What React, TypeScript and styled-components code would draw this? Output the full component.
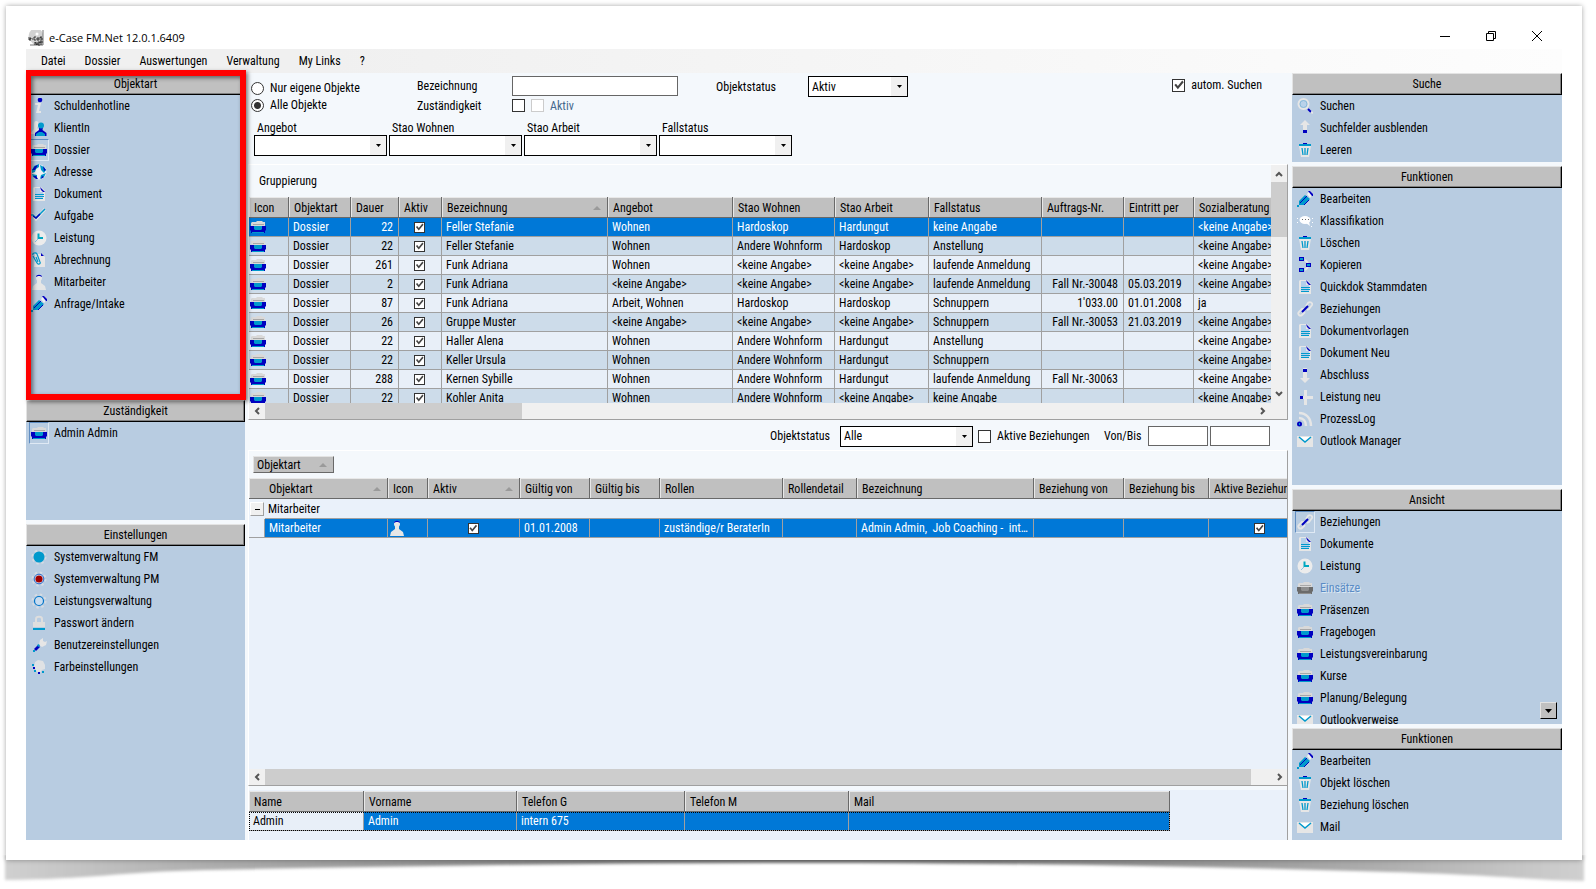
import React, { useId } from "react";
import styled, { createGlobalStyle, css } from "styled-components";

const color = {
  panel: "#b8cce1",
  client: "#f4f8fc",
  grid: "#eaf1fa",
  rowEven: "#e8eff8",
  rowOdd: "#cddcea",
  silver: "#c0c0c0",
  line: "#a0a0a0",
  dark: "#696969",
  select: "#0078d7",
  navy: "#0000c0",
  cyan: "#0099cc",
  pale: "#e6e6e6",
};

const GlobalStyle = createGlobalStyle`
  *, *::before, *::after { box-sizing: border-box; }
  body { margin: 0; background: #fff; }
  body, button, input, select, table {
    font: 12px/14px "Roboto Condensed", "Liberation Sans", sans-serif;
    color: #000;
  }
  button { border: 0; padding: 0; background: none; }
`;

/* ---------- icons ---------- */

type IconName =
  | "info" | "client" | "folder" | "folderOff" | "globe" | "doc" | "check" | "clock"
  | "clip" | "person" | "pencil" | "sysBlue" | "sysRed" | "sysRing" | "lock" | "wrench"
  | "palette" | "search" | "up" | "down" | "trash" | "chat" | "copy" | "link" | "plus"
  | "feed" | "mail";

const cog = (
  <circle cx="8" cy="8" r="6.5" fill="none" stroke="#d5dbe2" strokeWidth="2" strokeDasharray="2.4 2.7" />
);

const folder = (body: string, inner: string) => (
  <>
    <path d="M2 3h4l1-1h5l1 1h2v4H1V4z" fill="#d9d9d9" />
    <path d="M3 5h11v1H3z" fill="#a8a8a8" />
    <path d="M0 7h16v4l-1 1v2H1v-2l-1-1z" fill={body} />
    <path d="M4 7h8v3l-1 1H5l-1-1zM2 13h12v1H2z" fill={inner} />
  </>
);

const drawings: Record<IconName, React.ReactNode> = {
  info: (
    <>
      <circle cx="9" cy="2" r="2.3" fill={color.navy} />
      <path d="M4 5h6L8 13h2v2H5l2-8H4z" fill={color.pale} />
    </>
  ),
  client: (
    <>
      <path d="M5 1c2 0 3 2 2.500 4L6 8l2 2v4H0c0-3 2-3 3-5V4c0-2 1-3 2-3z" fill={color.pale} />
      <path d="M8 7h4l-.5 3 4 3v3H4v-3l4-3z" fill={color.navy} />
      <circle cx="10" cy="5.500" r="3" fill={color.cyan} />
      <path d="M8 12h3l3 2v2H5v-2z" fill={color.cyan} />
    </>
  ),
  folder: folder(color.navy, color.cyan),
  folderOff: folder("#6b6b6b", "#8e8e8e"),
  globe: (
    <>
      <circle cx="8" cy="8" r="7.500" fill="#eef1f4" />
      <path d="M3 2l5-2v3L5 5 4 8 1 9V6zM9 1l4 2 2 3-2 3-3-3zM15 9l-2 4-4 2 1-4zM1 10l5 1v4l-4-2z" fill={color.cyan} />
      <path d="M4 2l3-1-3 5H1zM12 2l3 4-2 1zM2 12h3l2 3-2 0zM11 12l2 1-3 2z" fill={color.navy} />
    </>
  ),
  doc: (
    <>
      <path d="M3 1h7l4 4v10H2V2z" fill={color.pale} />
      <path d="M4 2h5v4h3v7H4z" fill="#b4d0ea" />
      <path d="M9 1l5 5h-2L10 4z" fill={color.navy} />
      <path d="M4 8h9v1H4zM4 10h9v1H4zM4 12h8v1H4z" fill={color.cyan} />
    </>
  ),
  check: (
    <>
      <path d="M1 6l4 5 9-10" fill="none" stroke={color.pale} strokeWidth="3" />
      <path d="M0 7h2l3 3L14 1" fill="none" stroke={color.cyan} strokeWidth="1.500" />
      <path d="M2 8l3 2 4-4" fill="none" stroke={color.navy} strokeWidth="1.500" />
    </>
  ),
  clock: (
    <>
      <circle cx="8" cy="8" r="7.500" fill="#ececec" />
      <path d="M7.500 3.500V8H12" fill="none" stroke="#00a8c0" strokeWidth="2" />
      <path d="M4 12l3-3" stroke="#8fc5de" />
    </>
  ),
  clip: (
    <>
      <path d="M4 2h7l3 3v10H3z" fill={color.pale} />
      <path d="M2 4l4 7c1 2 4 1 3-1L6 2C5 0 1 1 2 3M5 5l2 5" fill="none" stroke={color.cyan} strokeWidth="1.200" />
      <path d="M10 1l3 3h-3z" fill={color.navy} />
    </>
  ),
  person: (
    <>
      <circle cx="8" cy="4" r="3" fill={color.pale} />
      <path d="M6 5h4v4l4 3 1 4H1l1-4 4-3z" fill={color.pale} />
      <path d="M5 3c0-3 6-3 6 0L9 2H7z" fill={color.navy} />
    </>
  ),
  pencil: (
    <>
      <path d="M10 3l3-3 3 3-3 4z" fill="#f2f2f2" />
      <path d="M11 0h2l3 3v2h-1z" fill={color.navy} />
      <path d="M8 4l5 4-6 6H2V10z" fill={color.cyan} />
      <path d="M3 12l7-7M7 14l5-5" stroke={color.navy} />
      <path d="M0 14h2v2H0z" fill={color.cyan} />
    </>
  ),
  sysBlue: <>{cog}<circle cx="8" cy="8" r="5.500" fill={color.cyan} /></>,
  sysRed: (
    <>
      {cog}
      <circle cx="8" cy="8" r="4.800" fill="#dfe6f4" stroke="#004cc0" strokeWidth=".8" />
      <circle cx="8" cy="8" r="3.600" fill="#a00000" />
    </>
  ),
  sysRing: <>{cog}<circle cx="8" cy="8" r="4.500" fill="#c8dcf0" stroke="#0074c8" strokeWidth="1.200" /></>,
  lock: (
    <>
      <path d="M5 7V4c0-3 6-3 6 0v3" fill="none" stroke="#dedede" strokeWidth="2" />
      <path d="M2 7h12v5H2z" fill="#dedede" />
      <path d="M2 13h12v2H2z" fill={color.cyan} />
    </>
  ),
  wrench: (
    <>
      <path d="M8 8l1-5 3-2v3l2 1 2-1-1 4-4 2z" fill={color.pale} />
      <path d="M3 12l4-4 2 2-4 4z" fill={color.navy} />
      <path d="M6 8l2-1 1 2-2 1zM2 13h2v2H2z" fill={color.cyan} />
    </>
  ),
  palette: (
    <>
      <path d="M4 3l3-2 5 1 2 4v4l-3 1-2 3-3-1-3-5z" fill="#e0e2e4" />
      <path d="M1 5h2v2H1zM3 11h2v2H3zM11 12h2v2h-2z" fill={color.cyan} />
      <path d="M2 8h2v2H2zM7 13h2v2H7z" fill={color.navy} />
    </>
  ),
  search: (
    <>
      <circle cx="6.500" cy="6" r="5" fill="#b9d2ea" stroke={color.pale} strokeWidth="2" />
      <circle cx="6.500" cy="6" r="3.500" fill="none" stroke="#7cb4d4" strokeWidth=".8" />
      <path d="M11 11l3 3" stroke={color.navy} strokeWidth="2" />
      <path d="M14 14l2 1" stroke={color.pale} strokeWidth="2" />
    </>
  ),
  up: (
    <>
      <path d="M8 0l5 5h-3v8H6V5H3z" fill={color.pale} />
      <path d="M6 10h4v3H6z" fill={color.navy} />
    </>
  ),
  down: (
    <>
      <path d="M8 16l5-5h-3V1H6v10H3z" fill={color.pale} />
      <path d="M6 2h4v3H6z" fill={color.navy} />
    </>
  ),
  trash: (
    <>
      <path d="M2 4h12l-2 11H4z" fill={color.pale} />
      <path d="M2 2h12v2H2z" fill={color.cyan} />
      <path d="M6 1h4v1H6z" fill={color.navy} />
      <path d="M5 6l1 7M8 6v7M11 6l-1 7" stroke={color.cyan} strokeWidth="1.300" />
    </>
  ),
  chat: (
    <>
      <ellipse cx="8" cy="7" rx="5.500" ry="4" fill="#fff" />
      <path d="M0 5h1v1H0zM0 9h1v1H0zM15 5h1v1h-1zM15 9h1v1h-1zM14 13h1v1h-1z" fill="#fff" />
      <path d="M9 10l4 3-1-4z" fill="#fff" />
      <path d="M5 6h1v1H5zM8 6h1v1H8zM11 6h1v1h-1z" fill={color.dark} />
    </>
  ),
  copy: (
    <>
      <path d="M8 3l3 3M8 13l3-3" stroke={color.pale} strokeWidth="2" />
      <path d="M2 0h5v4H2zM2 11h5v4H2zM9 6h5v4H9z" fill={color.navy} />
      <path d="M3 1h3v2H3zM3 12h3v2H3zM10 7h3v2h-3z" fill={color.cyan} />
    </>
  ),
  link: (
    <>
      <path d="M9 5l2-3c2-2 5 0 4 2l-3 4-2 1M7 8H5l-3 3c-2 2 1 5 3 3l3-3" fill="none" stroke={color.pale} strokeWidth="1.800" />
      <path d="M5 11l6-6" stroke={color.navy} strokeWidth="2" />
    </>
  ),
  plus: (
    <>
      <path d="M7 1h3v6h6v3h-6v6H7v-6H4V7h3z" fill={color.pale} />
      <path d="M3 7h3v3H3z" fill={color.navy} />
    </>
  ),
  feed: (
    <>
      <path d="M2 2c7 0 12 5 12 13M2 7c4 0 7 3 7 8" fill="none" stroke={color.pale} strokeWidth="2.500" />
      <circle cx="2.500" cy="13" r="2.500" fill={color.navy} />
      <path d="M2 12h1v2H2z" fill={color.cyan} />
    </>
  ),
  mail: (
    <>
      <path d="M0 3h16v11H0z" fill={color.pale} />
      <path d="M2 4l6 5 6-5" fill="#fff" stroke={color.cyan} strokeWidth="1.500" />
    </>
  ),
};

const Svg = styled.svg`
  display: block;
  flex: none;
`;

const Icon = ({ name }: { name: IconName }) => (
  <Svg width="16" height="16" viewBox="0 0 16 16" aria-hidden="true">{drawings[name]}</Svg>
);

/* ---------- window frame ---------- */

const Page = styled.div`
  position: relative;
  display: flex;
  min-height: 100vh;
  padding: 6px 14px 29px 6px;
`;

const Sheet = styled.div`
  position: relative;
  z-index: 1;
  flex: 1;
  min-width: 0;
  display: flex;
  flex-direction: column;
  padding: 20px;
  background: #fff;
  box-shadow: 0 0 5px rgba(0, 0, 0, 0.35);
`;

const Curl = styled.svg`
  position: absolute;
  left: 0;
  bottom: 0;
  width: 100%;
  height: 34px;
`;

const TitleBar = styled.header`
  display: flex;
  align-items: center;
  height: 23px;
  padding: 0 2px;
`;

const Title = styled.h1`
  flex: 1;
  margin: 0 0 0 5px;
  font: 11px/16px "Open Sans", "Noto Sans", sans-serif;
`;

const WindowButton = styled.button`
  display: flex;
  justify-content: center;
  width: 46px;
  height: 16px;
`;

const MenuBar = styled.nav`
  display: flex;
  gap: 1px;
  height: 24px;
  padding-left: 6px;
  background: linear-gradient(90deg, #f0f0f0 20%, #fdfdfd);
`;

const MenuButton = styled.button`
  padding: 0 9px;
`;

const Body = styled.div`
  flex: 1;
  display: flex;
  background: ${color.client};
`;

const Side = styled.aside<{ $width: number }>`
  flex: none;
  position: relative;
  display: flex;
  flex-direction: column;
  gap: 4px;
  width: ${p => p.$width}px;
`;

const Main = styled.main`
  flex: 1;
  min-width: 0;
  display: flex;
  flex-direction: column;
  margin: 0 4px 0 3px;
`;

/* ---------- side panels ---------- */

const PanelBox = styled.section<{ $share: number }>`
  position: relative;
  flex: ${p => p.$share} 1 0;
  min-height: 0;
  overflow: hidden;
  background: ${color.panel};
`;

const PanelTitle = styled.h2`
  height: 22px;
  margin: 0;
  font: inherit;
  line-height: 21px;
  text-align: center;
  background: ${color.silver};
  border: 1px solid;
  border-color: #e3e3e3 #000 #000 #e3e3e3;
  box-shadow: inset -1px -1px #808080;
`;

const List = styled.ul`
  margin: 0;
  padding: 0 0 0 3px;
  list-style: none;
`;

const ItemButton = styled.button`
  display: flex;
  align-items: center;
  gap: 5px;
  height: 22px;
  white-space: nowrap;
  &:disabled {
    color: #5a8cc6;
    text-shadow: 1px 1px #dce8f4;
  }
`;

const IconFrame = styled.span<{ $pressed?: boolean }>`
  display: flex;
  align-items: center;
  justify-content: center;
  width: 20px;
  height: 22px;
  border: 1px solid transparent;
  ${p => p.$pressed && css`border-color: #5f8dc2 #dfe9f4 #dfe9f4 #5f8dc2;`}
`;

const ScrollDown = styled.button`
  position: absolute;
  right: 5px;
  bottom: 5px;
  display: flex;
  align-items: center;
  justify-content: center;
  width: 17px;
  height: 17px;
  background: ${color.silver};
  border: 1px solid;
  border-color: #e3e3e3 #000 #000 #e3e3e3;
`;

const Highlight = styled.div`
  position: absolute;
  z-index: 2;
  inset: -3px -1px -4px 0;
  border: 6px solid #f00;
  border-left-width: 5px;
  box-shadow: 2px 2px 4px rgba(0, 0, 0, 0.5), inset 2px 2px 4px rgba(0, 0, 0, 0.5);
  pointer-events: none;
`;

const HighlightHost = styled.div<{ $share: number }>`
  position: relative;
  display: flex;
  flex-direction: column;
  flex: ${p => p.$share} 1 0;
`;

type Item = [IconName, string, ("pressed" | "off")?];

const Panel = ({ title, items, share, more }: { title: string; items: Item[]; share: number; more?: boolean }) => (
  <PanelBox $share={share}>
    <PanelTitle>{title}</PanelTitle>
    <List>
      {items.map(([icon, label, state]) => (
        <li key={label}>
          <ItemButton disabled={state === "off"}>
            <IconFrame $pressed={state === "pressed"}><Icon name={icon} /></IconFrame>
            {label}
          </ItemButton>
        </li>
      ))}
    </List>
    {more && (
      <ScrollDown aria-label="Weitere Einträge">
        <svg width="7" height="4" viewBox="0 0 7 4"><path d="M0 0h7L3.500 4z" /></svg>
      </ScrollDown>
    )}
  </PanelBox>
);

/* ---------- form controls ---------- */

const Check = styled.input.attrs({ type: "checkbox" })<{ $small?: boolean }>`
  appearance: none;
  flex: none;
  display: block;
  width: ${p => (p.$small ? 11 : 13)}px;
  height: ${p => (p.$small ? 11 : 13)}px;
  margin: 0;
  background: #fff;
  border: 1px solid #333;
  &:disabled { border-color: #ccc; }
  &:checked::before {
    content: "";
    display: block;
    height: 100%;
    background: #444;
    clip-path: polygon(10% 50%, 25% 38%, 42% 60%, 82% 10%, 95% 24%, 42% 88%);
  }
`;

const Radio = styled.input.attrs({ type: "radio" })`
  appearance: none;
  width: 13px;
  height: 13px;
  margin: 0;
  background: #fff;
  border: 1px solid #333;
  border-radius: 50%;
  &:checked { background: radial-gradient(circle, #333 3px, #fff 4px); }
`;

const TextBox = styled.input<{ $width: number }>`
  display: block;
  width: ${p => p.$width}px;
  height: 20px;
  padding: 0 3px;
  background: #fff;
  border: 1px solid #666;
  border-radius: 0;
`;

const SelectFrame = styled.span<{ $width: number }>`
  position: relative;
  display: block;
  width: ${p => p.$width}px;
`;

const SelectBox = styled.select`
  appearance: none;
  display: block;
  width: 100%;
  height: 21px;
  padding: 0 20px 0 3px;
  background: linear-gradient(#f0f0f0, #f0f0f0) right / 16px 100% no-repeat #fff;
  border: 1px solid #000;
  border-radius: 0;
`;

const SelectArrow = styled.svg`
  position: absolute;
  right: 6px;
  top: 9px;
  pointer-events: none;
`;

const Select = ({ id, width, value }: { id: string; width: number; value: string }) => (
  <SelectFrame $width={width}>
    <SelectBox id={id} defaultValue={value}><option>{value}</option></SelectBox>
    <SelectArrow width="5" height="3" viewBox="0 0 5 3" aria-hidden="true"><path d="M0 0h5L2.500 3z" /></SelectArrow>
  </SelectFrame>
);

const Filters = styled.form`
  display: flex;
  flex-direction: column;
  gap: 7px;
  height: 91px;
  padding: 3px 26px 0 3px;
`;

const FilterTop = styled.div`
  display: flex;
  align-items: flex-start;
  height: 38px;
`;

const RadioGroup = styled.div`
  display: flex;
  flex-direction: column;
  gap: 3px;
  width: 166px;
  padding-top: 5px;
`;

const Choice = styled.label<{ $muted?: boolean }>`
  display: flex;
  align-items: center;
  gap: 6px;
  height: 14px;
  white-space: nowrap;
  ${p => p.$muted && css`color: #44688c;`}
`;

const FieldGrid = styled.div`
  display: grid;
  grid-template-columns: 95px auto;
  grid-template-rows: 20px 13px;
  row-gap: 3px;
  align-items: center;
  margin-right: 38px;
`;

const Inline = styled.div`
  display: flex;
  gap: 6px;
`;

const StatusField = styled.div`
  display: flex;
  align-items: center;
  gap: 32px;
`;

const AutoSearch = styled.div`
  margin: 2px 0 0 auto;
`;

const ComboRow = styled.div`
  display: flex;
  gap: 2px;
  padding-left: 3px;
`;

const ComboField = styled.div`
  & > label {
    display: block;
    padding-left: 3px;
  }
`;

const Combo = ({ label }: { label: string }) => {
  const id = useId();
  return (
    <ComboField>
      <label htmlFor={id}>{label}</label>
      <Select id={id} width={133} value="" />
    </ComboField>
  );
};

const RelationBar = styled.form`
  display: flex;
  align-items: center;
  justify-content: flex-end;
  height: 30px;
  padding: 2px 18px 0 0;
`;

const BarLabel = styled.label<{ $width: number }>`
  width: ${p => p.$width}px;
  white-space: nowrap;
`;

const BarChoice = styled.div`
  width: 126px;
  padding-left: 5px;
  box-sizing: content-box;
`;

const DatePair = styled.div`
  display: flex;
  gap: 2px;
`;

/* ---------- grids ---------- */

const GridFrame = styled.section<{ $share: number }>`
  flex: ${p => p.$share} 1 0;
  min-height: 0;
  display: flex;
  flex-direction: column;
  border: 1px solid;
  border-color: #fff ${color.line} ${color.line} #fff;
`;

const GridBody = styled.div`
  flex: 1;
  min-height: 0;
  display: flex;
`;

const GridView = styled.div`
  flex: 1 1 0;
  min-width: 0;
  height: 0;
  min-height: 100%;
  overflow: hidden;
  background: ${color.grid};
`;

const GroupBar = styled.div<{ $height: number }>`
  display: flex;
  align-items: center;
  height: ${p => p.$height}px;
  padding: 0 0 0 4px;
  background: ${color.client};
`;

const GroupHint = styled.span`
  padding-left: 6px;
`;

const GroupChip = styled.button`
  display: flex;
  align-items: center;
  justify-content: space-between;
  width: 81px;
  height: 17px;
  padding: 0 6px 0 3px;
  background: ${color.silver};
  border: 1px solid;
  border-color: #e3e3e3 ${color.dark} ${color.dark} #e3e3e3;
`;

const Table = styled.table<{ $width: string }>`
  width: ${p => p.$width};
  table-layout: fixed;
  border-collapse: separate;
  border-spacing: 0;
`;

const Head = styled.th<{ $indent?: number }>`
  height: 21px;
  padding: 2px 6px 0 ${p => p.$indent ?? 5}px;
  font-weight: normal;
  text-align: left;
  white-space: nowrap;
  overflow: hidden;
  background: ${color.silver};
  border-right: 1px solid ${color.dark};
  border-bottom: 1px solid ${color.dark};
  box-shadow: inset 1px 1px #e8e8e8;
`;

const HeadLabel = styled.span`
  display: flex;
  align-items: center;
  justify-content: space-between;
`;

const Row = styled.tr<{ $tone: "even" | "odd" | "selected" }>`
  color: ${p => (p.$tone === "selected" ? "#fff" : "#000")};
  background: ${p => ({ even: color.rowEven, odd: color.rowOdd, selected: color.select })[p.$tone]};
`;

const Cell = styled.td<{ $right?: boolean; $icon?: boolean }>`
  height: 19px;
  padding: ${p => (p.$icon ? "0 1px" : "0 5px 0 4px")};
  text-align: ${p => (p.$right ? "right" : "left")};
  white-space: nowrap;
  overflow: hidden;
  text-overflow: ellipsis;
  border-right: 1px solid ${color.line};
  border-bottom: 1px solid ${color.line};
  & > input { margin: 0 auto; }
`;

const ClipCell = styled(Cell)`
  text-overflow: clip;
`;

const IndentCell = styled(Cell)`
  background: ${color.grid};
`;

const GroupToggleCell = styled.td`
  height: 20px;
  padding: 0 1px;
`;

const GroupTitleCell = styled.td`
  padding: 0 3px;
  border-bottom: 1px solid ${color.line};
`;

const GroupToggle = styled.button`
  display: flex;
  align-items: center;
  justify-content: center;
  width: 14px;
  height: 14px;
  background: #f0f0f0;
  border: 1px solid;
  border-color: #fff ${color.line} ${color.line} #fff;
`;

const ContactView = styled.section`
  height: 54px;
  padding-top: 5px;
  background: linear-gradient(${color.client} 4px, ${color.grid} 4px);
  border-left: 1px solid #fff;
  border-right: 1px solid ${color.line};
`;

const ContactRow = styled(Row)`
  outline: 1px dotted #000;
  outline-offset: -1px;
`;

const ContactName = styled(Cell)`
  color: #000;
  background: ${color.rowEven};
`;

const SortMark = () => (
  <svg width="8" height="4" viewBox="0 0 8 4" aria-hidden="true"><path d="M0 4h8L4 0z" fill="#9a9a9a" /></svg>
);

/* ---------- scroll bars ---------- */

const VScroll = styled.div`
  display: flex;
  flex-direction: column;
  width: 16px;
  padding: 1px 0;
  background: #f0f0f0;
`;

const HScroll = styled.div`
  display: flex;
  height: 16px;
  background: #f0f0f0;
`;

const ScrollButton = styled.button`
  flex: none;
  display: flex;
  align-items: center;
  justify-content: center;
  width: 16px;
  height: 16px;
`;

const ScrollTrack = styled.div`
  flex: 1;
  display: flex;
  flex-direction: inherit;
`;

const Thumb = styled.div<{ $size: string }>`
  flex: 0 0 ${p => p.$size};
  background: #cdcdcd;
`;

const HGap = styled.div<{ $width: number }>`
  width: ${p => p.$width}px;
`;

const arrows = {
  up: "M1 6l3-3 3 3",
  down: "M1 2l3 3 3-3",
  left: "M6 1L3 4l3 3",
  right: "M3 1l3 3-3 3",
};

const Arrow = ({ dir, label }: { dir: keyof typeof arrows; label: string }) => (
  <ScrollButton type="button" aria-label={label}>
    <svg width="8" height="8" viewBox="0 0 8 8"><path d={arrows[dir]} fill="none" stroke="#555" strokeWidth="2" /></svg>
  </ScrollButton>
);

/* ---------- data ---------- */

const objectTypes: Item[] = [
  ["info", "Schuldenhotline"], ["client", "KlientIn"], ["folder", "Dossier", "pressed"],
  ["globe", "Adresse"], ["doc", "Dokument"], ["check", "Aufgabe"], ["clock", "Leistung"],
  ["clip", "Abrechnung"], ["person", "Mitarbeiter"], ["pencil", "Anfrage/Intake"],
];
const owners: Item[] = [["folder", "Admin Admin", "pressed"]];
const settings: Item[] = [
  ["sysBlue", "Systemverwaltung FM"], ["sysRed", "Systemverwaltung PM"],
  ["sysRing", "Leistungsverwaltung"], ["lock", "Passwort ändern"],
  ["wrench", "Benutzereinstellungen"], ["palette", "Farbeinstellungen"],
];
const searchItems: Item[] = [["search", "Suchen"], ["up", "Suchfelder ausblenden"], ["trash", "Leeren"]];
const functions: Item[] = [
  ["pencil", "Bearbeiten"], ["chat", "Klassifikation"], ["trash", "Löschen"], ["copy", "Kopieren"],
  ["doc", "Quickdok Stammdaten"], ["link", "Beziehungen"], ["doc", "Dokumentvorlagen"],
  ["doc", "Dokument Neu"], ["down", "Abschluss"], ["plus", "Leistung neu"],
  ["feed", "ProzessLog"], ["mail", "Outlook Manager"],
];
const views: Item[] = [
  ["link", "Beziehungen", "pressed"], ["doc", "Dokumente"], ["clock", "Leistung"],
  ["folderOff", "Einsätze", "off"], ["folder", "Präsenzen"], ["folder", "Fragebogen"],
  ["folder", "Leistungsvereinbarung"], ["folder", "Kurse"], ["folder", "Planung/Belegung"],
  ["mail", "Outlookverweise"],
];
const relationFunctions: Item[] = [
  ["pencil", "Bearbeiten"], ["trash", "Objekt löschen"], ["trash", "Beziehung löschen"], ["mail", "Mail"],
];

const none = "<keine Angabe>";
const dossierColumns: [string, number?][] = [
  ["Icon", 40], ["Objektart", 62], ["Dauer", 48], ["Aktiv", 43], ["Bezeichnung", 166],
  ["Angebot", 125], ["Stao Wohnen", 102], ["Stao Arbeit", 94], ["Fallstatus", 113],
  ["Auftrags-Nr.", 82], ["Eintritt per", 70], ["Sozialberatung"],
];
const dossiers: string[][] = [
  ["22", "Feller Stefanie", "Wohnen", "Hardoskop", "Hardungut", "keine Angabe", "", "", none],
  ["22", "Feller Stefanie", "Wohnen", "Andere Wohnform", "Hardoskop", "Anstellung", "", "", none],
  ["261", "Funk Adriana", "Wohnen", none, none, "laufende Anmeldung", "", "", none],
  ["2", "Funk Adriana", none, none, none, "laufende Anmeldung", "Fall Nr.-30048", "05.03.2019", none],
  ["87", "Funk Adriana", "Arbeit, Wohnen", "Hardoskop", "Hardoskop", "Schnuppern", "1'033.00", "01.01.2008", "ja"],
  ["26", "Gruppe Muster", none, none, none, "Schnuppern", "Fall Nr.-30053", "21.03.2019", none],
  ["22", "Haller Alena", "Wohnen", "Andere Wohnform", "Hardungut", "Anstellung", "", "", none],
  ["22", "Keller Ursula", "Wohnen", "Andere Wohnform", "Hardungut", "Schnuppern", "", "", none],
  ["288", "Kernen Sybille", "Wohnen", "Andere Wohnform", "Hardungut", "laufende Anmeldung", "Fall Nr.-30063", "", none],
  ["22", "Kohler Anita", "Wohnen", "Andere Wohnform", none, "keine Angabe", "", "", none],
];

const relationColumns: [string, number?, boolean?][] = [
  ["Objektart", 123, true], ["Icon", 40], ["Aktiv", 92, true], ["Gültig von", 70], ["Gültig bis", 70],
  ["Rollen", 123], ["Rollendetail", 74], ["Bezeichnung"], ["Beziehung von", 90],
  ["Beziehung bis", 85], ["Aktive Beziehung", 103],
];

const contactColumns: [string, number][] = [
  ["Name", 115], ["Vorname", 153], ["Telefon G", 168], ["Telefon M", 164], ["Mail", 321],
];

/* ---------- page sections ---------- */

const DossierGrid = () => (
  <GridFrame $share={256}>
    <GridBody>
      <GridView>
        <GroupBar $height={32}><GroupHint>Gruppierung</GroupHint></GroupBar>
        <Table $width="calc(100% + 20px)">
          <colgroup>{dossierColumns.map(([name, width]) => <col key={name} width={width} />)}</colgroup>
          <thead>
            <tr>
              {dossierColumns.map(([name]) => (
                <Head key={name} scope="col">
                  <HeadLabel>{name}{name === "Bezeichnung" && <SortMark />}</HeadLabel>
                </Head>
              ))}
            </tr>
          </thead>
          <tbody>
            {dossiers.map((row, i) => (
              <Row key={i} $tone={i === 0 ? "selected" : i % 2 ? "odd" : "even"}>
                <Cell $icon><Icon name="folder" /></Cell>
                <Cell>Dossier</Cell>
                <Cell $right>{row[0]}</Cell>
                <Cell><Check $small defaultChecked aria-label={`${row[1]} aktiv`} /></Cell>
                {row.slice(1, 6).map((text, j) => <Cell key={j}>{text}</Cell>)}
                <Cell $right>{row[6]}</Cell>
                <Cell>{row[7]}</Cell>
                <ClipCell>{row[8]}</ClipCell>
              </Row>
            ))}
          </tbody>
        </Table>
      </GridView>
      <VScroll>
        <Arrow dir="up" label="Nach oben" />
        <ScrollTrack><Thumb $size="27%" /></ScrollTrack>
        <Arrow dir="down" label="Nach unten" />
      </VScroll>
    </GridBody>
    <HScroll>
      <Arrow dir="left" label="Nach links" />
      <ScrollTrack><Thumb $size="26%" /></ScrollTrack>
      <Arrow dir="right" label="Nach rechts" />
      <HGap $width={17} />
    </HScroll>
  </GridFrame>
);

const RelationGrid = () => (
  <GridFrame $share={336}>
    <GridBody>
      <GridView>
        <GroupBar $height={27}><GroupChip>Objektart<SortMark /></GroupChip></GroupBar>
        <Table $width="calc(100% + 25px)">
          <colgroup>
            <col width={16} />
            {relationColumns.map(([name, width]) => <col key={name} width={width} />)}
          </colgroup>
          <thead>
            <tr>
              {relationColumns.map(([name, , sorted], i) => (
                <Head key={name} scope="col" colSpan={i ? 1 : 2} $indent={i ? 5 : 20}>
                  <HeadLabel>{name}{sorted && <SortMark />}</HeadLabel>
                </Head>
              ))}
            </tr>
          </thead>
          <tbody>
            <tr>
              <GroupToggleCell>
                <GroupToggle aria-label="Gruppe zuklappen">
                  <svg width="5" height="1" viewBox="0 0 5 1"><path d="M0 0h5v1H0z" /></svg>
                </GroupToggle>
              </GroupToggleCell>
              <GroupTitleCell colSpan={11}>Mitarbeiter</GroupTitleCell>
            </tr>
            <Row $tone="selected">
              <IndentCell />
              <Cell>Mitarbeiter</Cell>
              <Cell $icon><Icon name="person" /></Cell>
              <Cell><Check $small defaultChecked aria-label="Mitarbeiter aktiv" /></Cell>
              <Cell>01.01.2008</Cell>
              <Cell />
              <Cell>zuständige/r BeraterIn</Cell>
              <Cell />
              <Cell>Admin Admin,&nbsp; Job Coaching - &nbsp;int...</Cell>
              <Cell />
              <Cell />
              <Cell><Check $small defaultChecked aria-label="Aktive Beziehung" /></Cell>
            </Row>
          </tbody>
        </Table>
      </GridView>
    </GridBody>
    <HScroll>
      <Arrow dir="left" label="Nach links" />
      <ScrollTrack><Thumb $size="98%" /></ScrollTrack>
      <Arrow dir="right" label="Nach rechts" />
    </HScroll>
  </GridFrame>
);

const ContactGrid = () => (
  <ContactView>
    <Table $width="921px">
      <colgroup>{contactColumns.map(([name, width]) => <col key={name} width={width} />)}</colgroup>
      <thead>
        <tr>{contactColumns.map(([name]) => <Head key={name} scope="col">{name}</Head>)}</tr>
      </thead>
      <tbody>
        <ContactRow $tone="selected">
          <ContactName>Admin</ContactName>
          <Cell>Admin</Cell>
          <Cell>intern 675</Cell>
          <Cell />
          <Cell />
        </ContactRow>
      </tbody>
    </Table>
  </ContactView>
);

const SearchForm = () => (
  <Filters>
    <FilterTop>
      <RadioGroup role="radiogroup" aria-label="Objekte">
        <Choice><Radio name="scope" />Nur eigene Objekte</Choice>
        <Choice><Radio name="scope" defaultChecked />Alle Objekte</Choice>
      </RadioGroup>
      <FieldGrid>
        <label htmlFor="name">Bezeichnung</label>
        <TextBox id="name" $width={166} />
        <label htmlFor="owner">Zuständigkeit</label>
        <Inline>
          <Check id="owner" />
          <Choice $muted><Check disabled />Aktiv</Choice>
        </Inline>
      </FieldGrid>
      <StatusField>
        <label htmlFor="status">Objektstatus</label>
        <Select id="status" width={100} value="Aktiv" />
      </StatusField>
      <AutoSearch><Choice><Check defaultChecked />autom. Suchen</Choice></AutoSearch>
    </FilterTop>
    <ComboRow>
      <Combo label="Angebot" />
      <Combo label="Stao Wohnen" />
      <Combo label="Stao Arbeit" />
      <Combo label="Fallstatus" />
    </ComboRow>
  </Filters>
);

const RelationFilter = () => (
  <RelationBar>
    <BarLabel htmlFor="relStatus" $width={70}>Objektstatus</BarLabel>
    <Select id="relStatus" width={133} value="Alle" />
    <BarChoice><Choice><Check />Aktive Beziehungen</Choice></BarChoice>
    <BarLabel htmlFor="from" $width={44}>Von/Bis</BarLabel>
    <DatePair>
      <TextBox id="from" $width={60} />
      <TextBox aria-label="Bis" $width={60} />
    </DatePair>
  </RelationBar>
);

const Logo = () => (
  <Svg width="16" height="16" viewBox="0 0 16 16" aria-hidden="true">
    <path d="M1 9a7 8 0 0 1 14-5v11H6z" fill="#d2d2d2" />
    <circle cx="9" cy="4" r="1.500" fill="#fff" />
    <path d="M15 0v15H2" fill="none" stroke="#777" />
    <path d="M0 8h3v1H1v1h2M4 9h1M8 7H6v3h2M9 8h2v2H9zM14 7h-2v1h2v2h-2M7 15v-3l2 3v-3M10 12h2v1h-2v2h2M13 11v4M12 12h3" fill="none" stroke="#111" strokeWidth=".8" />
  </Svg>
);

export default function App() {
  return (
    <Page>
      <GlobalStyle />
      <Curl viewBox="0 0 1596 34" preserveAspectRatio="none" aria-hidden="true">
        <defs>
          <linearGradient id="curlTone">
            <stop offset="0" stopColor="#d0d0d0" />
            <stop offset=".12" stopColor="#b0b0b0" />
            <stop offset=".4" stopColor="#777" />
            <stop offset=".6" stopColor="#777" />
            <stop offset=".88" stopColor="#b0b0b0" />
            <stop offset="1" stopColor="#d0d0d0" />
          </linearGradient>
          <filter id="curlBlur" x="-1%" y="-20%" width="102%" height="160%"><feGaussianBlur stdDeviation="1.500" /></filter>
        </defs>
        <path
          d="M5 0H1584V26C1530 25 1500 20 1390 17C1200 11 1000 8 800 8C600 8 400 11 205 15C120 17 90 24 5 25z"
          fill="url(#curlTone)"
          filter="url(#curlBlur)"
        />
      </Curl>
      <Sheet>
        <TitleBar>
          <Logo />
          <Title>e-Case FM.Net 12.0.1.6409</Title>
          <WindowButton aria-label="Minimieren">
            <svg width="10" height="16" viewBox="0 0 10 16"><path d="M0 6h10v1H0z" /></svg>
          </WindowButton>
          <WindowButton aria-label="Verkleinern">
            <svg width="10" height="16" viewBox="0 0 10 16"><path d="M.5 3.500h7v7h-7zM2.500 3.500v-2h7v7h-2" fill="none" stroke="#000" /></svg>
          </WindowButton>
          <WindowButton aria-label="Schliessen">
            <svg width="10" height="16" viewBox="0 0 10 16"><path d="M0 1l10 10M10 1L0 11" stroke="#000" /></svg>
          </WindowButton>
        </TitleBar>
        <MenuBar>
          {["Datei", "Dossier", "Auswertungen", "Verwaltung", "My Links", "?"].map(name => (
            <MenuButton key={name}>{name}</MenuButton>
          ))}
        </MenuBar>
        <Body>
          <Side $width={219}>
            <HighlightHost $share={323}>
              <Panel title="Objektart" items={objectTypes} share={1} />
              <Highlight />
            </HighlightHost>
            <Panel title="Zuständigkeit" items={owners} share={120} />
            <Panel title="Einstellungen" items={settings} share={316} />
          </Side>
          <Main>
            <SearchForm />
            <DossierGrid />
            <RelationFilter />
            <RelationGrid />
            <ContactGrid />
          </Main>
          <Side $width={270}>
            <Panel title="Suche" items={searchItems} share={89} />
            <Panel title="Funktionen" items={functions} share={319} />
            <Panel title="Ansicht" items={views} share={235} more />
            <Panel title="Funktionen" items={relationFunctions} share={112} />
          </Side>
        </Body>
      </Sheet>
    </Page>
  );
}
